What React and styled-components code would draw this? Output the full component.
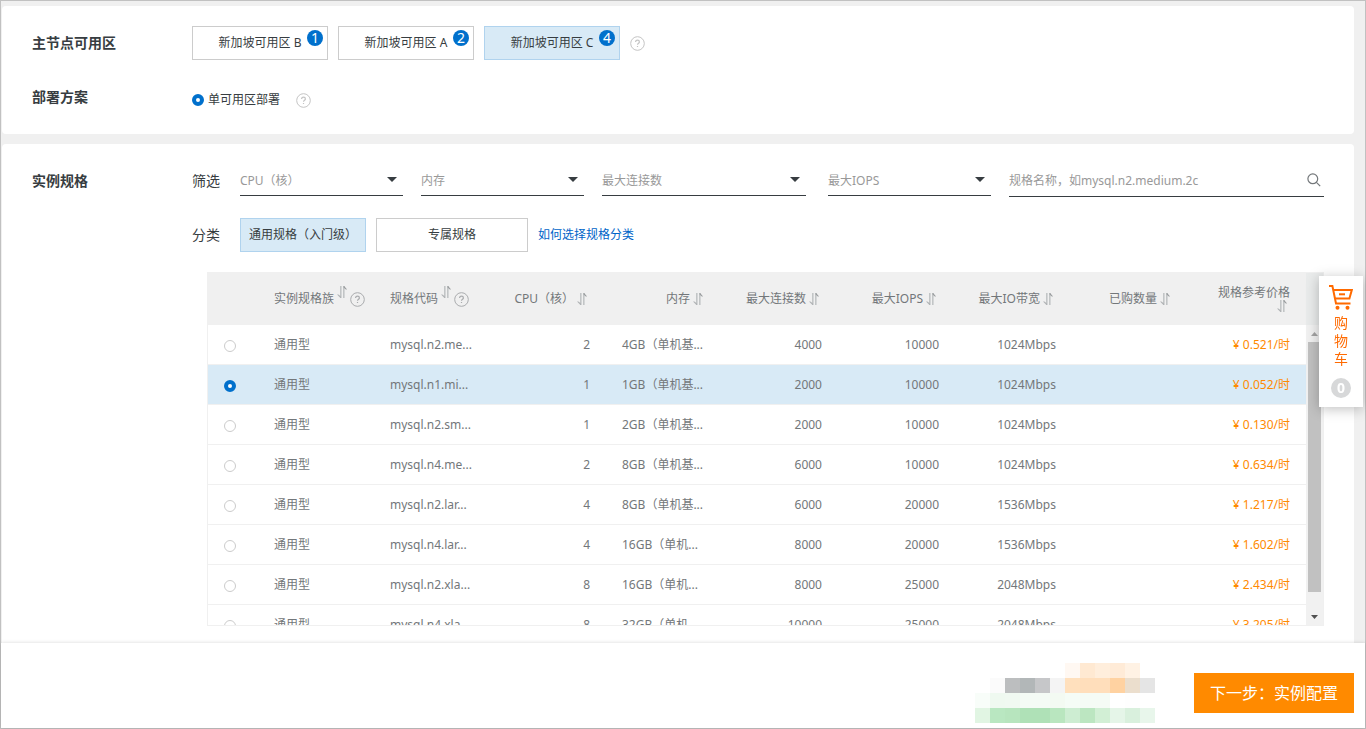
import React, { useState } from "react";
import styled, { createGlobalStyle, css } from "styled-components";

const color = {
  page: "#f0f0f0",
  frame: "#c1c1c1",
  text: "#373d41",
  muted: "#73777a",
  hint: "#999999",
  line: "#f0f0f0",
  border: "#cccccc",
  blue: "#0070cc",
  link: "#0064c8",
  selected: "#d8eaf6",
  selectedBorder: "#b0d3ee",
  orange: "#ff8a00",
  cart: "#ff6a00",
};

const GlobalStyle = createGlobalStyle`
  *, *::before, *::after { box-sizing: border-box; }
  body {
    margin: 0;
    background: ${color.page};
    color: ${color.text};
    font: 12px/18px "Noto Sans", "Noto Sans CJK SC", sans-serif;
  }
  button, input, select { font: inherit; color: inherit; margin: 0; }
`;

const Page = styled.div`
  display: flex;
  flex-direction: column;
  height: 100vh;
  border: 1px solid ${color.frame};
`;

const Main = styled.main`
  display: flex;
  flex-direction: column;
  gap: 10px;
  flex: 1;
  min-height: 0;
  overflow: hidden auto;
  padding: 5px 11px 0 1px;
`;

const Panel = styled.section`
  display: flex;
  flex-direction: column;
  gap: 20px;
  padding: 20px 30px;
  background: #fff;
  border-radius: 4px;
  flex: ${(p) => (p.$fill ? "1 0 auto" : "none")};
  ${(p) => p.$fill && css`
    padding-bottom: 0;
    border-radius: 4px 4px 0 0;
  `}
`;

const FormRow = styled.div`
  display: flex;
  align-items: flex-start;
`;

const FormLabel = styled.h2`
  flex: none;
  width: 160px;
  margin: 0;
  font-size: 14px;
  font-weight: 700;
  line-height: 34px;
`;

const FormContent = styled.div`
  flex: 1;
  min-width: 0;
`;

const Options = styled.div`
  display: flex;
  align-items: center;
  gap: 10px;
`;

const OptionButton = styled.button`
  position: relative;
  min-width: ${(p) => p.$width}px;
  height: 34px;
  padding: 0 7px;
  border: 1px solid ${(p) => (p.$on ? color.selectedBorder : color.border)};
  background: ${(p) => (p.$on ? color.selected : "#fff")};
  cursor: pointer;
`;

const Badge = styled.span`
  position: absolute;
  top: 3px;
  right: 4px;
  width: 16px;
  height: 16px;
  border-radius: 50%;
  background: ${color.blue};
  color: #fff;
  font-size: 14px;
  line-height: 16px;
  text-align: center;
`;

const DeployOptions = styled.div`
  display: flex;
  align-items: center;
  gap: 16px;
  height: 34px;
  padding-top: 6px;
`;

const RadioLabel = styled.label`
  display: flex;
  align-items: center;
  gap: 4px;
`;

const Radio = styled.input.attrs({ type: "radio" })`
  appearance: none;
  display: block;
  width: 12px;
  height: 12px;
  border: 1px solid ${color.border};
  border-radius: 50%;
  background: #fff;
  &:checked { border: 4px solid ${color.blue}; }
`;

const HelpSvg = styled.svg`
  flex: none;
  display: block;
  color: ${(p) => (p.$dark ? "#a9abad" : "#c4c4c4")};
`;

const FieldRow = styled.div`
  display: flex;
  align-items: ${(p) => (p.$center ? "center" : "flex-start")};
  margin-bottom: 20px;
`;

const FieldLabel = styled.span`
  flex: none;
  width: 48px;
  font-size: 14px;
  line-height: 34px;
`;

const SelectBox = styled.div`
  position: relative;
  flex: none;
  width: ${(p) => (p.$wide ? 204 : 163)}px;
  margin-right: ${(p) => (p.$wide ? 22 : 18)}px;
  svg { position: absolute; top: 13px; right: 6px; pointer-events: none; }
`;

const Select = styled.select`
  appearance: none;
  display: block;
  width: 100%;
  height: 32px;
  padding: 3px 20px 0 0;
  border: 0;
  border-bottom: 1px solid ${color.text};
  border-radius: 0;
  background: transparent;
  color: ${color.hint};
`;

const SearchBox = styled.div`
  display: flex;
  align-items: center;
  flex: 1;
  height: 33px;
  padding-right: 3px;
  border-bottom: 1px solid ${color.text};
`;

const SearchInput = styled.input`
  flex: 1;
  min-width: 0;
  height: 32px;
  padding: 1px 0 0;
  border: 0;
  outline: 0;
  background: transparent;
  &::placeholder { color: ${color.hint}; opacity: 1; }
`;

const IconButton = styled.button`
  display: block;
  padding: 0;
  border: 0;
  background: none;
  color: ${color.muted};
  svg { display: block; }
`;

const Link = styled.a`
  color: ${color.link};
  text-decoration: none;
`;

const TableFrame = styled.div`
  display: flex;
  height: 354px;
  margin-left: 15px;
  border: 1px solid ${color.line};
`;

const TableView = styled.div`
  flex: 1;
  min-width: 0;
  overflow: hidden;
`;

const Table = styled.table`
  width: 100%;
  table-layout: fixed;
  border-collapse: separate;
  border-spacing: 0;
  color: ${color.muted};
`;

const Col = styled.col`
  width: ${(p) => (p.$width ? `${p.$width}px` : "auto")};
`;

const Th = styled.th`
  height: 52px;
  padding: 0 16px;
  background: ${color.page};
  font-weight: 400;
  white-space: nowrap;
`;

const HeadContent = styled.div`
  display: flex;
  align-items: center;
  justify-content: ${(p) => (p.$left ? "flex-start" : "flex-end")};
  gap: 3px;
  padding-right: ${(p) => (p.$left ? 0 : 3)}px;
  svg { flex: none; display: block; }
  ${(p) => p.$stacked && css`
    flex-direction: column;
    align-items: flex-end;
    gap: 0;
    line-height: 14px;
  `}
`;

const HeadText = styled.span`
  margin-right: ${(p) => (p.$stacked ? -3 : 0)}px;
`;

const RaisedIcon = styled.span`
  padding-bottom: 14px;
`;

const Tr = styled.tr`
  background: ${(p) => (p.$on ? color.selected : "#fff")};
`;

const Td = styled.td`
  height: 40px;
  padding: 0 16px;
  border-bottom: 1px solid ${color.line};
  text-align: ${(p) => (p.$right ? "right" : "left")};
  white-space: nowrap;
  color: ${(p) => (p.$price ? color.orange : "inherit")};
`;

const RadioTd = styled(Td)`
  padding-top: 3px;
`;

const ScrollColumn = styled.div`
  display: flex;
  flex-direction: column;
  flex: none;
  width: 17px;
`;

const ScrollCorner = styled.div`
  height: 52px;
  background: #e9ebeb;
`;

const ScrollTrack = styled.div`
  display: flex;
  flex-direction: column;
  align-items: center;
  flex: 1;
  min-height: 0;
  background: #f1f1f1;
`;

const ScrollArrow = styled.div`
  display: flex;
  align-items: center;
  justify-content: center;
  width: 17px;
  height: 17px;
`;

const ScrollThumb = styled.div`
  width: 13px;
  height: 250px;
  margin-bottom: auto;
  background: #c1c1c1;
`;

const Cart = styled.aside`
  position: fixed;
  top: 276px;
  right: 3px;
  display: flex;
  flex-direction: column;
  align-items: center;
  width: 44px;
  padding: 9px 0;
  background: #fff;
  box-shadow: 0 2px 12px rgba(0, 0, 0, 0.25);
`;

const CartLink = styled.a`
  display: flex;
  flex-direction: column;
  align-items: center;
  gap: 4px;
  color: ${color.cart};
  font-size: 14px;
  line-height: 18px;
  text-align: center;
  text-decoration: none;
`;

const CartText = styled.span`
  width: 14px;
  white-space: normal;
  word-break: break-all;
`;

const CartCount = styled.span`
  width: 20px;
  height: 20px;
  margin-top: 10px;
  border-radius: 50%;
  background: #d7d8d9;
  color: #fff;
  font-size: 14px;
  font-weight: 700;
  line-height: 20px;
  text-align: center;
`;

const Footer = styled.footer`
  position: relative;
  display: flex;
  align-items: center;
  justify-content: flex-end;
  gap: 39px;
  padding: 20px 11px 5px;
  background: #fff;
  box-shadow: 0 0 4px rgba(0, 0, 0, 0.16);
`;

const NextButton = styled.button`
  width: 160px;
  height: 40px;
  padding: 0;
  border: 0;
  background: ${color.orange};
  color: #fff;
  font-size: 16px;
  cursor: pointer;
`;

function Help({ dark }) {
  return (
    <HelpSvg $dark={dark} width="15" height="15" viewBox="0 0 15 15" fill="none" stroke="currentColor" aria-hidden="true">
      <circle cx="7.5" cy="7.5" r="6.8" />
      <path d="M5.6 6.1C5.6 4.9 6.4 4.2 7.5 4.2S9.4 4.9 9.4 5.9C9.4 7.2 7.5 7.2 7.5 8.8M7.5 9.9V11" strokeWidth="1.2" />
    </HelpSvg>
  );
}

function Sort() {
  return (
    <svg width="10" height="12" viewBox="0 0 10 12" aria-hidden="true">
      <path d="M3 0H4.6V12H3Z" fill="#c2c5c6" />
      <path d="M0 8.4H1.4L4 10.6V12H3.4Z" fill="#b0b3b5" />
      <path d="M6 0H7.6V12H6Z" fill="#c2c5c6" />
      <path d="M6.6 0H7.2L10 3.6H8.8L6.6 1.6Z" fill="#999c9e" />
    </svg>
  );
}

function Triangle({ up, fill = color.text, width = 10, height = 5 }) {
  return (
    <svg width={width} height={height} viewBox="0 0 10 5" preserveAspectRatio="none" aria-hidden="true">
      <path d={up ? "M0 5L5 0L10 5Z" : "M0 0H10L5 5Z"} fill={fill} />
    </svg>
  );
}

function CartIcon() {
  return (
    <svg width="24" height="25" viewBox="0 0 24 25" fill="none" stroke={color.cart} strokeWidth="2" aria-hidden="true">
      <path d="M0 1H3.4L7 18.5H21.5" />
      <path d="M4.2 5H22.8L20.4 13.6H6" />
      <path d="M10 9.3H16" />
      <circle cx="8.5" cy="22.8" r="2" fill={color.cart} stroke="none" />
      <circle cx="18.5" cy="22.8" r="2" fill={color.cart} stroke="none" />
    </svg>
  );
}

const MOSAIC = [
  [null, null, null, null, null, null, "#fff8f2", "#ffe9d2", "#ffeedc", "#ffebd7", "#fff2e4", null],
  [null, "#fbfbfb", "#bcbebf", "#b2b7b8", "#c6c7c9", "#f4f4f4", "#ffe0bd", "#ffdebb", "#ffdebb", "#ffd2a1", "#ebdecd", "#e5e5e5"],
  ["#f8fdf9", "#eff9f0", "#f0f9f1", "#f4fbf5", "#f4fbf5", "#f3faf2", "#f5fcf6", "#f5fbf5", "#f5fbf5", null, "#fefefe", null],
  ["#e1f5e3", "#b9e7c1", "#b7e5be", "#afe1b7", "#afe1b7", "#b9e6bf", "#cdedd2", "#bce6c1", "#d2efd5", "#e5f5e8", "#d9f0dd", "#e8f6eb"],
];

function Mosaic() {
  return (
    <svg width="180" height="60" viewBox="0 0 180 60" shapeRendering="crispEdges" aria-hidden="true">
      {MOSAIC.map((line, y) =>
        line.map((fill, x) => fill && <rect key={`${x}-${y}`} x={x * 15} y={y * 15} width="15" height="15" fill={fill} />)
      )}
    </svg>
  );
}

const ZONES = [
  { name: "新加坡可用区 B", count: 1 },
  { name: "新加坡可用区 A", count: 2 },
  { name: "新加坡可用区 C", count: 4 },
];

const FILTERS = [
  { name: "CPU（核）" },
  { name: "内存" },
  { name: "最大连接数", wide: true },
  { name: "最大IOPS" },
];

const COLUMNS = [
  { name: "实例规格族", help: true, width: 116 },
  { name: "规格代码", help: true, width: 116 },
  { name: "CPU（核）", width: 116 },
  { name: "内存", width: 116 },
  { name: "最大连接数", width: 116 },
  { name: "最大IOPS" },
  { name: "最大IO带宽" },
  { name: "已购数量" },
  { name: "规格参考价格", stacked: true },
];

const ROWS = [
  ["mysql.n2.me...", 2, "4GB（单机基...", 4000, 10000, "1024Mbps", "0.521"],
  ["mysql.n1.mi...", 1, "1GB（单机基...", 2000, 10000, "1024Mbps", "0.052"],
  ["mysql.n2.sm...", 1, "2GB（单机基...", 2000, 10000, "1024Mbps", "0.130"],
  ["mysql.n4.me...", 2, "8GB（单机基...", 6000, 10000, "1024Mbps", "0.634"],
  ["mysql.n2.lar...", 4, "8GB（单机基...", 6000, 20000, "1536Mbps", "1.217"],
  ["mysql.n4.lar...", 4, "16GB（单机...", 8000, 20000, "1536Mbps", "1.602"],
  ["mysql.n2.xla...", 8, "16GB（单机...", 8000, 25000, "2048Mbps", "2.434"],
  ["mysql.n4.xla...", 8, "32GB（单机...", 10000, 25000, "2048Mbps", "3.205"],
];

function HeadCell({ column }) {
  return (
    <Th scope="col">
      <HeadContent $left={column.help} $stacked={column.stacked}>
        <HeadText $stacked={column.stacked}>{column.name}</HeadText>
        {column.help ? (
          <>
            <RaisedIcon><Sort /></RaisedIcon>
            <Help dark />
          </>
        ) : (
          <Sort />
        )}
      </HeadContent>
    </Th>
  );
}

export default function App() {
  const [zone, setZone] = useState(2);
  const [kind, setKind] = useState(0);
  const [spec, setSpec] = useState(1);

  return (
    <>
      <GlobalStyle />
      <Page>
        <Main>
          <Panel>
            <FormRow>
              <FormLabel>主节点可用区</FormLabel>
              <Options>
                {ZONES.map((z, i) => (
                  <OptionButton key={z.name} type="button" $width={136} $on={zone === i} onClick={() => setZone(i)}>
                    {z.name}
                    <Badge>{z.count}</Badge>
                  </OptionButton>
                ))}
                <Help />
              </Options>
            </FormRow>
            <FormRow>
              <FormLabel>部署方案</FormLabel>
              <DeployOptions>
                <RadioLabel>
                  <Radio name="deploy" defaultChecked />
                  单可用区部署
                </RadioLabel>
                <Help />
              </DeployOptions>
            </FormRow>
          </Panel>

          <Panel $fill>
            <FormRow>
              <FormLabel>实例规格</FormLabel>
              <FormContent>
                <FieldRow>
                  <FieldLabel>筛选</FieldLabel>
                  {FILTERS.map((f) => (
                    <SelectBox key={f.name} $wide={f.wide}>
                      <Select aria-label={f.name}>
                        <option>{f.name}</option>
                      </Select>
                      <Triangle />
                    </SelectBox>
                  ))}
                  <SearchBox>
                    <SearchInput type="text" aria-label="规格名称" placeholder="规格名称，如mysql.n2.medium.2c" />
                    <IconButton type="button" aria-label="搜索">
                      <svg width="14" height="14" viewBox="0 0 14 14" fill="none" stroke="currentColor" strokeWidth="1.2">
                        <circle cx="5.8" cy="5.8" r="4.9" />
                        <path d="M9.4 9.4L13.2 13.2" />
                      </svg>
                    </IconButton>
                  </SearchBox>
                </FieldRow>
                <FieldRow $center>
                  <FieldLabel>分类</FieldLabel>
                  <Options>
                    <OptionButton type="button" $width={126} $on={kind === 0} onClick={() => setKind(0)}>
                      通用规格（入门级）
                    </OptionButton>
                    <OptionButton type="button" $width={152} $on={kind === 1} onClick={() => setKind(1)}>
                      专属规格
                    </OptionButton>
                    <Link href="#guide">如何选择规格分类</Link>
                  </Options>
                </FieldRow>
                <TableFrame>
                  <TableView>
                    <Table>
                      <colgroup>
                        <Col $width={50} />
                        {COLUMNS.map((c) => <Col key={c.name} $width={c.width} />)}
                      </colgroup>
                      <thead>
                        <tr>
                          <Th />
                          {COLUMNS.map((c) => <HeadCell key={c.name} column={c} />)}
                        </tr>
                      </thead>
                      <tbody>
                        {ROWS.map(([code, cpu, memory, connections, iops, bandwidth, price], i) => (
                          <Tr key={code + memory} $on={spec === i}>
                            <RadioTd>
                              <Radio name="spec" aria-label={code} checked={spec === i} onChange={() => setSpec(i)} />
                            </RadioTd>
                            <Td>通用型</Td>
                            <Td>{code}</Td>
                            <Td $right>{cpu}</Td>
                            <Td>{memory}</Td>
                            <Td $right>{connections}</Td>
                            <Td $right>{iops}</Td>
                            <Td $right>{bandwidth}</Td>
                            <Td />
                            <Td $right $price>¥ {price}/时</Td>
                          </Tr>
                        ))}
                      </tbody>
                    </Table>
                  </TableView>
                  <ScrollColumn aria-hidden="true">
                    <ScrollCorner />
                    <ScrollTrack>
                      <ScrollArrow><Triangle up fill="#a3a3a3" width={7} height={4} /></ScrollArrow>
                      <ScrollThumb />
                      <ScrollArrow><Triangle fill="#505050" width={7} height={4} /></ScrollArrow>
                    </ScrollTrack>
                  </ScrollColumn>
                </TableFrame>
              </FormContent>
            </FormRow>
          </Panel>
        </Main>

        <Footer>
          <Mosaic />
          <NextButton type="button">下一步：实例配置</NextButton>
        </Footer>

        <Cart>
          <CartLink href="#cart">
            <CartIcon />
            <CartText>购物车</CartText>
          </CartLink>
          <CartCount>0</CartCount>
        </Cart>
      </Page>
    </>
  );
}
